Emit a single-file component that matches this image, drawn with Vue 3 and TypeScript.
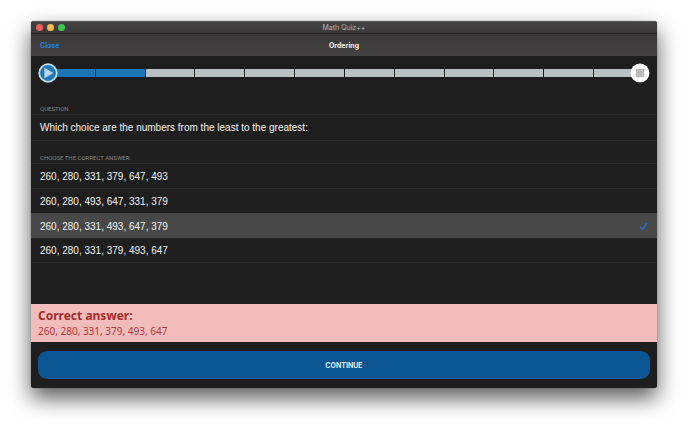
<script setup lang="ts">
import { computed, ref } from 'vue'

const answers: string[] = [
  '260, 280, 331, 379, 647, 493',
  '260, 280, 493, 647, 331, 379',
  '260, 280, 331, 493, 647, 379',
  '260, 280, 331, 379, 493, 647',
]
const correct = 3
const selected = ref(2)
const total = 12
const done = ref(2)
const revealed = computed(() => selected.value !== correct)

function next(): void {
  done.value = Math.min(total, done.value + 1)
}
</script>

<template>
  <div class="desktop">
    <main class="window">
      <header class="titlebar">
        <div class="lights">
          <button type="button" class="light red" aria-label="Close window"></button>
          <button type="button" class="light yellow" aria-label="Minimize window"></button>
          <button type="button" class="light green" aria-label="Zoom window"></button>
        </div>
        <span class="title">Math Quiz++</span>
      </header>

      <nav class="navbar">
        <a href="#" class="close">Close</a>
        <h1 class="heading">Ordering</h1>
      </nav>

      <div class="progress" role="progressbar" aria-label="Quiz progress" :aria-valuenow="done" aria-valuemin="0" :aria-valuemax="total">
        <div class="track">
          <span v-for="n in total" :key="n" class="segment" :class="{ filled: n <= done }"></span>
        </div>
        <svg class="marker start" viewBox="0 0 20 20" aria-hidden="true">
          <circle cx="10" cy="10" r="8.8" fill="#2379b5" stroke="#c3dff0" stroke-width="1.7" />
          <path d="M6.4 4.8 15.4 10 6.4 15.2Z" fill="#b5d5ea" />
        </svg>
        <svg class="marker end" viewBox="0 0 20 20" aria-hidden="true">
          <circle cx="10" cy="10" r="9.4" fill="#fdfdfd" />
          <rect x="5.8" y="5.8" width="8.4" height="8.4" fill="#bcbcbc" />
        </svg>
      </div>

      <h2 class="label">QUESTION</h2>
      <p class="question">Which choice are the numbers from the least to the greatest:</p>

      <fieldset class="choices">
        <legend class="label">CHOOSE THE CORRECT ANSWER:</legend>
        <label v-for="(answer, i) in answers" :key="answer" class="row" :class="{ active: selected === i }">
          <input v-model="selected" type="radio" name="answer" class="radio" :value="i" />
          <span>{{ answer }}</span>
          <svg v-if="selected === i" class="check" viewBox="0 0 10 10" aria-hidden="true">
            <path d="M1.6 5.6 3.9 8.2 8.3 1.8" fill="none" stroke="#2f76d6" stroke-width="1.4" stroke-linecap="round" stroke-linejoin="round" />
          </svg>
        </label>
      </fieldset>

      <footer class="footer">
        <section v-if="revealed" class="result">
          <h2 class="result-title">Correct answer:</h2>
          <p class="result-text">{{ answers[correct] }}</p>
        </section>
        <div class="actions">
          <button type="button" class="continue" @click="next">CONTINUE</button>
        </div>
      </footer>
    </main>
  </div>
</template>

<style>
body {
  margin: 0;
  background: #fff;
}
</style>

<style scoped>
.desktop {
  box-sizing: border-box;
  display: flex;
  min-height: 100vh;
  padding: 21px 31px 42px;
  font-family: Inter, "Liberation Sans", sans-serif;
  overflow: hidden;
}
.window {
  display: flex;
  flex: 1;
  flex-direction: column;
  min-width: 0;
  border-radius: 3px;
  background: #1e1e1e;
  box-shadow: 0 0 1px #444, 0 10px 22px rgba(0, 0, 0, 0.66);
}
.titlebar {
  display: grid;
  grid-template-columns: 1fr auto 1fr;
  align-items: center;
  box-sizing: border-box;
  height: 13px;
  padding: 0 5px;
  border-top: 1px solid #5a5a5a;
  border-bottom: 1px solid #222;
  border-radius: 3px 3px 0 0;
  background: linear-gradient(#454344, #3a3839);
}
.lights {
  display: flex;
  gap: 4px;
}
.light {
  width: 7px;
  height: 7px;
  padding: 0;
  border: 0;
  border-radius: 50%;
}
.red { background: #ee6259; }
.yellow { background: #f5bd4f; }
.green { background: #3fc650; }
.title {
  color: #b5b4b4;
  font-size: 7px;
  line-height: 11px;
}
.navbar {
  display: grid;
  grid-template-columns: 1fr auto 1fr;
  align-items: center;
  height: 22px;
  padding: 0 9px;
  background: linear-gradient(#3b393a, #434142);
}
.close {
  color: #2a7de6;
  font-size: 7px;
  font-weight: 700;
  text-decoration: none;
}
.heading {
  margin: 0;
  color: #f0f0f0;
  font-size: 7px;
  font-weight: 700;
}
.progress {
  display: grid;
  align-items: center;
  height: 34px;
  padding: 0 7px;
}
.progress > * {
  grid-area: 1 / 1;
}
.track {
  display: flex;
  gap: 1px;
  margin: 0 7px 0 8px;
}
.segment {
  flex: 1;
  height: 8px;
  background: #b9c0c3;
}
.segment.filled {
  background: #1a76b5;
}
.marker {
  width: 20px;
  height: 20px;
}
.end {
  justify-self: end;
}
.label {
  margin: 0;
  padding: 13px 9px 0;
  color: #858585;
  font-family: Roboto, "Liberation Sans", sans-serif;
  font-size: 6px;
  font-weight: 400;
  line-height: 11px;
}
.question,
.row {
  color: #f4f4f4;
  font-family: "Liberation Sans", sans-serif;
  font-size: 10px;
}
.question {
  margin: 0;
  padding: 0 9px;
  border: 1px solid #292929;
  border-width: 1px 0;
  line-height: 25px;
}
.choices {
  min-width: 0;
  margin: 0;
  padding: 0;
  border: 0;
}
.choices .label {
  padding-top: 11px;
}
.row {
  display: flex;
  align-items: center;
  justify-content: space-between;
  box-sizing: border-box;
  height: 25px;
  padding: 0 9px;
  border-top: 1px solid #292929;
}
.row:last-child {
  border-bottom: 1px solid #292929;
}
.row.active {
  border-color: #484848;
  background: #484848;
}
.radio {
  position: absolute;
  width: 1px;
  height: 1px;
  margin: 0;
  opacity: 0;
}
.check {
  width: 9px;
  height: 9px;
}
.footer {
  margin-top: auto;
}
.result {
  padding: 4px 7px;
  background: #f3bcbc;
  color: #a52a2a;
  font-family: "Noto Sans", "DejaVu Sans", sans-serif;
}
.result-title {
  margin: 0;
  font-size: 12px;
  font-weight: 700;
  line-height: 16px;
}
.result-text {
  margin: 0;
  color: #ac3a3a;
  font-size: 10px;
  line-height: 14px;
}
.actions {
  display: flex;
  padding: 9px 7px;
}
.continue {
  flex: 1;
  height: 28px;
  padding: 0;
  border: 0;
  border-radius: 9px;
  background: #0b5592;
  color: #e4edf5;
  font-family: inherit;
  font-size: 7px;
  font-weight: 700;
}
</style>
